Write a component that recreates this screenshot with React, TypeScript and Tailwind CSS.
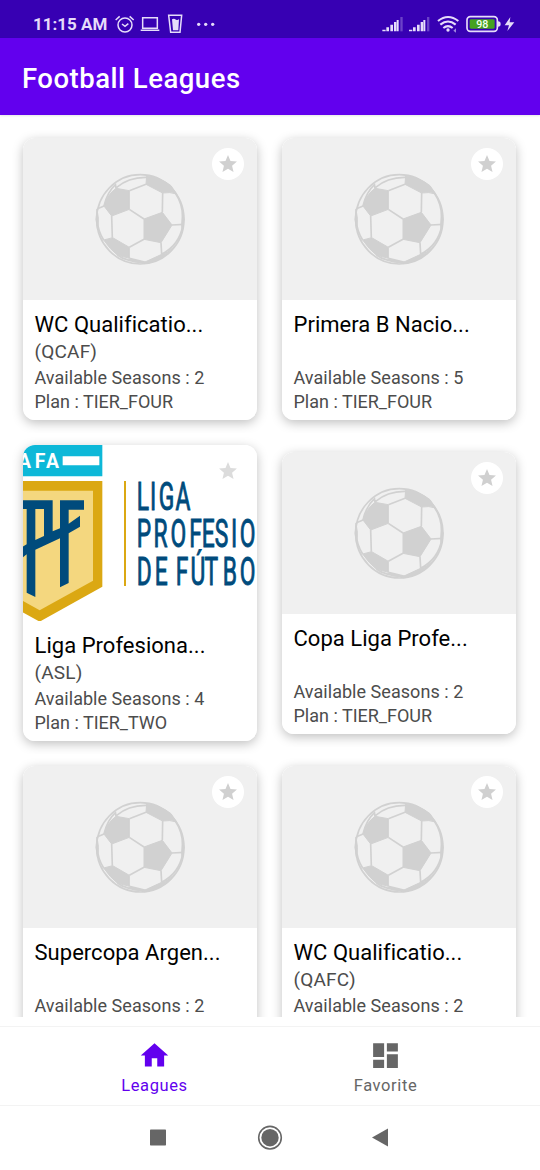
import React from "react";

type League = {
  name: string;
  abbr: string;
  seasons: number;
  plan: string;
  logo?: boolean;
};

const leagues: League[] = [
  { name: "WC Qualificatio...", abbr: "(QCAF)", seasons: 2, plan: "TIER_FOUR" },
  { name: "Primera B Nacio...", abbr: "", seasons: 5, plan: "TIER_FOUR" },
  { name: "Liga Profesiona...", abbr: "(ASL)", seasons: 4, plan: "TIER_TWO", logo: true },
  { name: "Copa Liga Profe...", abbr: "", seasons: 2, plan: "TIER_FOUR" },
  { name: "Supercopa Argen...", abbr: "", seasons: 2, plan: "TIER_FOUR" },
  { name: "WC Qualificatio...", abbr: "(QAFC)", seasons: 2, plan: "TIER_FOUR" },
];

function Ball() {
  return (
    <svg viewBox="0 0 330 330" className="mt-[2px] h-[110px] w-[110px]" fill="none" stroke="#d1d1d1" strokeWidth="6" strokeLinejoin="round">
      <ellipse cx="166" cy="163" rx="131" ry="134" strokeWidth="5" />
      <g fill="#d1d1d1" strokeWidth="3">
        <path d="M93 70L133 77V133L80 153L57 123Q66 90 93 70Z" />
        <path d="M185 32Q228 38 258 62L275 87Q254 80 233 84L183 58Z" />
        <path d="M177 162L232 142L261 180L228 233L177 223Z" />
        <path d="M56 225L83 218L133 247V280L97 270Q76 254 56 225Z" />
        <path d="M178 292L230 268Q250 264 262 250Q228 291 178 296Z" />
        <path d="M292 140L297 163L292 202L290 180Z" />
        <path d="M36 132L33 163L38 195L40 160Z" />
      </g>
      <path d="M133 77L183 58M233 84L232 142M133 133L177 162M80 153L82 218M133 247L177 223M228 233L230 268M261 180L297 178M57 123L36 132M93 70L91 55M94 68Q130 36 185 37M272 86Q291 112 294 160M293 183Q283 240 230 268M133 280L182 292M97 270Q120 288 180 294M56 225Q37 195 38 165M57 123Q66 82 92 58" strokeWidth="5" />
    </svg>
  );
}

function LigaLogo() {
  return (
    <svg viewBox="39 30 702 528" className="block h-[176px] w-[234px]" fontFamily="Roboto, 'Liberation Sans', sans-serif">
      <path d="M39 30H277V124H39Z" fill="#0db8d8" />
      <path d="M158 64H268V91H158Z" fill="#fff" />
      <text x="24 74 108" y="98" fontSize="58" fontWeight="700" fill="#fff">AFA</text>
      <path d="M-100 138H277V455L89 560L-100 455Z" fill="#dba813" />
      <path d="M-72 167H249V437L89 526L-72 437Z" fill="#f4d77f" />
      <path d="M36 196H128V289L150 280V196H222V224H176V266L210 242V275L176 295V444L150 457V310L76 344V486L50 473V358L36 369V336L50 328V222H36Z" fill="#004b7c" />
      <path d="M76 222H102V303L76 315Z" fill="#f4d77f" />
      <path d="M342 138H348V453H342Z" fill="#dba813" />
      <g fill="#004b7c" fontSize="114" stroke="#004b7c" strokeWidth="3" transform="scale(0.6 1)">
        <text x="634 700 744 828" y="224">LIGA</text>
        <text x="634 717 803 896 959 1024 1105 1149" y="337">PROFESIO</text>
        <text x="634 724 790 829 903 972 1064 1149" y="451">DE FÚTBO</text>
      </g>
    </svg>
  );
}

function LeagueCard({ league }: { league: League }) {
  return (
    <article className="relative w-[234px] overflow-hidden rounded-[12px] bg-white">
      {league.logo ? (
        <LigaLogo />
      ) : (
        <div className="flex h-[162px] items-center justify-center bg-[#f0f0f0]">
          <Ball />
        </div>
      )}
      <div className="absolute top-[9.5px] right-[13px] flex h-8 w-8 items-center justify-center rounded-full bg-white">
        <svg viewBox="2 2 20 19" className="h-[17px] w-[18px]" fill={league.logo ? "#dcdcdc" : "#d0d0d0"}>
          <path d="M12 17.27L18.18 21l-1.64-7.03L22 9.24l-7.19-.61L12 2 9.19 8.63 2 9.24l5.46 4.73L5.82 21z" />
        </svg>
      </div>
      <div className="h-[120px] pt-[10px] pl-[11.5px] whitespace-nowrap text-[#4c4c4c]">
        <h2 className="h-[29px] text-[22px] leading-[29px] tracking-[0.03px] text-black">{league.name}</h2>
        <p className="h-[26px] text-[19px] leading-[26px] tracking-[0.2px]">{league.abbr}</p>
        <p className="h-[25px] text-[18px] leading-[25px] tracking-[0.04px]">Available Seasons : {league.seasons}</p>
        <p className="h-[24px] text-[18px] leading-[24px]">Plan : {league.plan}</p>
      </div>
    </article>
  );
}

function StatusBar() {
  return (
    <div className="flex h-[38px] shrink-0 items-center bg-[#3700b3] pt-[9px] pr-[25px] pl-[33px] text-[#e6dcfa]">
      <span className="w-[75px] text-[17px] leading-5 font-bold whitespace-nowrap">11:15 AM</span>
      <svg viewBox="0 0 306 60" className="ml-[6px] h-5 w-[102px]" fill="none" stroke="currentColor" strokeWidth="4.5">
        <circle cx="33" cy="33" r="21" />
        <path d="M24 30L33 37L43 29M5 18L17 7M47 7L59 18" />
        <path d="M86 11H130V43H86ZM80 49H136" />
        <path d="M164 4H203L198 55H170Z" />
        <path d="M174 16Q180 12 186 17Q192 19 195 15L193 49H177Z" fill="currentColor" stroke="none" />
        <g fill="currentColor" stroke="none">
          <circle cx="254" cy="31" r="5" />
          <circle cx="275" cy="31" r="5" />
          <circle cx="296" cy="31" r="5" />
        </g>
      </svg>
      <div className="flex-1" />
      <svg viewBox="336 42 399 60" className="h-5 w-[133px] shrink-0" fill="currentColor">
        {[0, 80].map((dx) => (
          <g key={dx} transform={`translate(${dx} 0)`}>
            <path d="M337 89H347V94H337ZM349 82H357V94H349ZM361 74H369V94H361ZM372 66H379V94H372ZM380 60H386V94H380Z" />
            <path d="M391 51H398V94H391Z" opacity="0.3" />
          </g>
        ))}
        <g fill="none" stroke="currentColor" strokeWidth="6.5">
          <path d="M504 63Q534 39 565 63M511 74Q534 55 557 74M520 84Q534 73 548 84" />
          <rect x="591" y="50" width="91" height="44" rx="10" strokeWidth="5" />
        </g>
        <circle cx="534" cy="90" r="5" />
        <path d="M550 92L558 85V98Z" opacity="0.6" />
        <rect x="599" y="58" width="75" height="28" rx="4" fill="#45a120" />
        <path d="M684 64Q692 64 692 72Q692 80 684 80Z" />
        <text x="637" y="83" fontSize="32" fontWeight="500" textAnchor="middle" fill="#f4fff0">98</text>
        <path d="M721 51L704 76H717L712 93L733 67H719Z" />
      </svg>
    </div>
  );
}

export default function App() {
  return (
    <div className="flex h-[1170px] w-[540px] flex-col overflow-hidden bg-white font-[Roboto,'Liberation_Sans',sans-serif]">
      <StatusBar />
      <header className="z-10 flex h-[77px] shrink-0 items-center bg-[#6200ee] pt-[4px] pl-[22px] shadow-[0_1px_2px_rgba(0,0,0,0.1)]">
        <h1 className="text-[27.5px] leading-9 font-medium tracking-[0.5px] text-white">Football Leagues</h1>
      </header>
      <main className="h-[902px] shrink-0 overflow-hidden">
        <div className="grid grid-cols-[259px_259px] items-center pt-[11px] pl-[11px]">
          {leagues.map((league, i) => (
            <div key={i} className="overflow-hidden pt-[12px] pr-[13px] pb-[13px] pl-[12px]">
              <div className="rounded-[12px] shadow-[0_3px_11px_rgba(0,0,0,0.25)]">
                <LeagueCard league={league} />
              </div>
            </div>
          ))}
        </div>
      </main>
      <nav className="mt-[9px] flex h-20 shrink-0 justify-center border-y border-[#f3f3f3] text-[16.5px] leading-5 tracking-[0.6px]">
        <div className="flex w-[231px] flex-col items-center pt-[12px] text-[#6200ee]">
          <svg viewBox="0 0 24 24" className="h-[33px] w-[33px]" fill="currentColor">
            <path d="M10 20v-6h4v6h5v-8h3L12 3 2 12h3v8z" />
          </svg>
          <span className="mt-[4px]">Leagues</span>
        </div>
        <div className="flex w-[231px] flex-col items-center pt-[12px] text-[#666]">
          <svg viewBox="0 0 24 24" className="h-[33px] w-[33px]" fill="currentColor">
            <path d="M3 13h8V3H3v10zm0 8h8v-6H3v6zm10 0h8V11h-8v10zm0-18v6h8V3h-8z" />
          </svg>
          <span className="mt-[4px]">Favorite</span>
        </div>
      </nav>
      <div className="flex flex-1 items-center justify-center">
        <svg viewBox="0 0 240 28" className="h-7 w-[240px]" fill="#666">
          <rect x="0" y="5.5" width="16" height="16" rx="0.7" />
          <circle cx="120" cy="13.7" r="11.3" fill="none" stroke="#666" strokeWidth="1.6" />
          <circle cx="120" cy="13.7" r="8.7" />
          <path d="M222 13.5L238 4.5V22.5Z" />
        </svg>
      </div>
    </div>
  );
}
